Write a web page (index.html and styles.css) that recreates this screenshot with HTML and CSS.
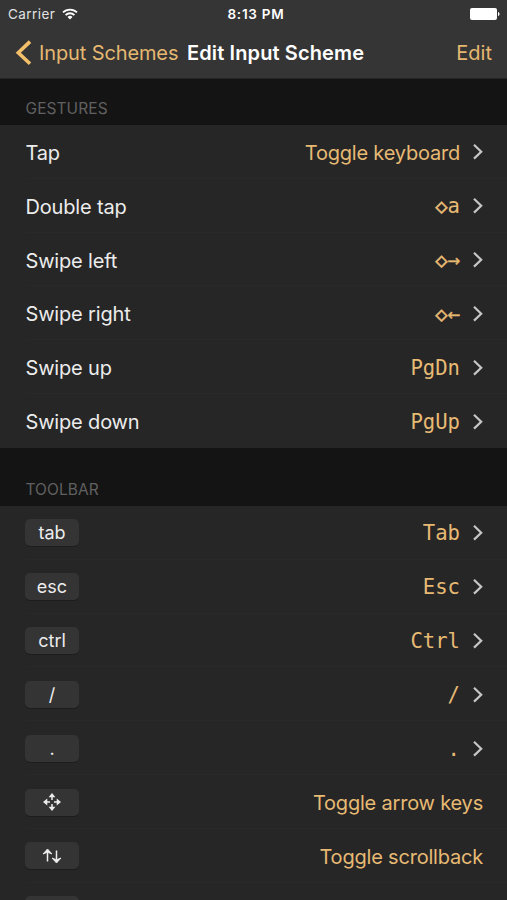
FILE: index.html
```html
<!DOCTYPE html>
<html lang="en">
<head>
<meta charset="utf-8">
<title>Edit Input Scheme</title>
<link rel="stylesheet" href="styles.css">
</head>
<body>
<svg class="defs" aria-hidden="true">
  <symbol id="chevron" viewBox="0 0 12 18"><path d="M2 1.800 9.200 8.700 2 15.600" fill="none" stroke="currentColor" stroke-width="2.200"/></symbol>
</svg>
<header class="top">
  <div class="status">
    <div class="carrier"><span>Carrier</span>
      <svg class="wifi" viewBox="0 0 16 12"><g fill="none" stroke="currentColor" stroke-width="1.8"><path d="M1 4.4a10 10 0 0 1 14 0"/><path d="M3.6 7.1a6.2 6.2 0 0 1 8.8 0"/></g><path d="M5.5 9a3.6 3.6 0 0 1 5 0L8 11.5z" fill="currentColor"/></svg>
    </div>
    <span class="time">8:13 PM</span>
    <svg class="battery" viewBox="0 0 30 12"><rect width="27" height="12" rx="2" fill="currentColor"/><path d="M28 4c2 .4 2 3.600 0 4z" fill="currentColor"/></svg>
  </div>
  <nav class="nav">
    <svg class="back-icon" viewBox="0 0 17 26"><path d="M15 1.600 3.300 12.700l11.700 11.100" fill="none" stroke="currentColor" stroke-width="3.600"/></svg>
    <a class="back">Input Schemes</a>
    <h1>Edit Input Scheme</h1>
    <a class="edit">Edit</a>
  </nav>
</header>
<main>
  <h2 class="first">GESTURES</h2>
  <ul>
    <li><span class="label">Tap</span><span class="value">Toggle keyboard</span><svg class="chev"><use href="#chevron"/></svg></li>
    <li><span class="label">Double tap</span><span class="value mono"><span class="sym">◇</span>a</span><svg class="chev"><use href="#chevron"/></svg></li>
    <li><span class="label">Swipe left</span><span class="value mono sym">◇→</span><svg class="chev"><use href="#chevron"/></svg></li>
    <li><span class="label">Swipe right</span><span class="value mono sym">◇←</span><svg class="chev"><use href="#chevron"/></svg></li>
    <li><span class="label">Swipe up</span><span class="value mono">PgDn</span><svg class="chev"><use href="#chevron"/></svg></li>
    <li><span class="label">Swipe down</span><span class="value mono">PgUp</span><svg class="chev"><use href="#chevron"/></svg></li>
  </ul>
  <h2>TOOLBAR</h2>
  <ul>
    <li><kbd>tab</kbd><span class="value mono">Tab</span><svg class="chev"><use href="#chevron"/></svg></li>
    <li><kbd>esc</kbd><span class="value mono">Esc</span><svg class="chev"><use href="#chevron"/></svg></li>
    <li><kbd>ctrl</kbd><span class="value mono">Ctrl</span><svg class="chev"><use href="#chevron"/></svg></li>
    <li><kbd>/</kbd><span class="value mono">/</span><svg class="chev"><use href="#chevron"/></svg></li>
    <li><kbd>.</kbd><span class="value mono">.</span><svg class="chev"><use href="#chevron"/></svg></li>
    <li><kbd><svg class="move" viewBox="0 0 18 18"><path d="M9 2v5M9 11v5M2 9h5M11 9h5" stroke="currentColor" stroke-width="1.500"/><path d="M9 0l3.400 4.300H5.600zM9 18l3.400-4.300H5.600zM0 9l4.300-3.400v6.800zM18 9l-4.300-3.400v6.800z" fill="currentColor"/></svg></kbd><span class="value last">Toggle arrow keys</span></li>
    <li><kbd><svg class="updown" viewBox="0 0 20 16"><path d="M5.500 2v11.500M14.500 2.500v11" stroke="currentColor" stroke-width="1.500"/><path d="M5.500 1l4.500 5-4.500-1.800L1 6zM14.500 15l4.500-5-4.500 1.800L10 10z" fill="currentColor" stroke="currentColor" stroke-width=".9"/></svg></kbd><span class="value last">Toggle scrollback</span></li>
    <li><kbd></kbd></li>
  </ul>
</main>
</body>
</html>
```
FILE: styles.css
```css
* { box-sizing: border-box; }
html, body { height: 900px; overflow: hidden; }
body { margin: 0; background: #141414; color: #ececec; font-family: Inter, sans-serif; font-size: 20px; }
.defs { display: none; }
svg { flex: none; }
.top { height: 79px; background: #353535; border-bottom: 1px solid #252525; color: #fff; }
.status { height: 27px; display: grid; grid-template-columns: 1fr auto 1fr; align-items: center; padding: 0 7px 0 8px; font-size: 13.5px; }
.carrier { display: flex; align-items: center; gap: 7px; color: #e2e2e2; letter-spacing: 0.45px; }
.wifi { width: 16px; height: 12px; color: #fff; }
.time { font-weight: 600; letter-spacing: 0.75px; padding-left: 4px; }
.battery { width: 30px; height: 12px; justify-self: end; }
.nav { height: 51px; display: flex; align-items: center; padding: 0 15px; }
.back-icon { width: 17px; height: 26px; color: #f3bf6b; margin-right: 7px; }
.back, .edit { color: #e5b871; }
.back { width: 148px; white-space: nowrap; letter-spacing: -0.12px; }
h1 { margin: 0; font-size: 20px; font-weight: 600; letter-spacing: 0.12px; white-space: nowrap; }
.edit { margin-left: auto; }
h2 { margin: 0; height: 58px; padding: 32px 25.5px 0; font-size: 15.5px; line-height: 20px; letter-spacing: 0.07px; font-weight: 400; color: #606060; }
h2.first { height: 46px; padding-top: 20px; }
ul { margin: 0; padding: 0; list-style: none; background: #262626; }
li { height: 53.84px; display: flex; align-items: center; padding: 2px 23px 0 25px; background: linear-gradient(#292929, #292929) 26px 100% / 100% 1px no-repeat; white-space: nowrap; }
li:last-child { background: none; }
.label { letter-spacing: -0.17px; padding-left: 0.5px; }
.value { margin-left: auto; color: #e7ba74; letter-spacing: -0.2px; }
.mono { font-family: "DejaVu Sans Mono", monospace; font-size: 20.6px; letter-spacing: 0; margin-top: -1px; }
.sym { -webkit-text-stroke: 0.45px currentColor; }
.chev { width: 12px; height: 18px; margin: -1px 0 0 12px; color: #c6c6c6; }
.last { margin-right: 1px; }
kbd { width: 54px; height: 27px; margin-top: -2px; display: flex; align-items: center; justify-content: center; border-radius: 5px; background: #343434; box-shadow: 0 1px 0 #1d1d1d; font: 18px/27px Inter, sans-serif; }
.move { width: 18px; height: 18px; }
.updown { width: 20px; height: 16px; }
```
